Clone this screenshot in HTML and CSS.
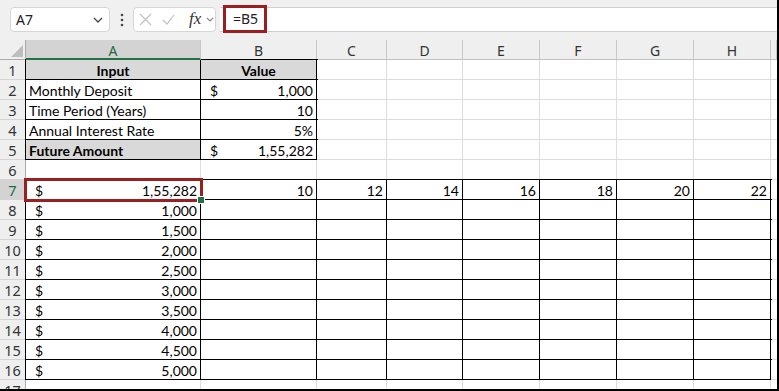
FILE: index.html
```html
<!DOCTYPE html>
<html lang="en">
<head>
  <meta charset="UTF-8" />
  <meta name="viewport" content="width=device-width, initial-scale=1.0"/>
  <title>Future Amount – Sheet</title>
  <link rel="stylesheet" href="styles.css">
</head>
<body>

<div class="app">

  <!-- Barra de fórmulas -->
  <div class="fbar">
    <div class="namebox">
      <span>A7</span>
      <svg width="10" height="6" viewBox="0 0 10 6"><polyline points="1,1 5,5 9,1" fill="none" stroke="#444" stroke-width="1.3"/></svg>
    </div>
    <svg class="dots" width="4" height="14" viewBox="0 0 4 14">
      <circle cx="2" cy="2" r="1.3" fill="#444"/>
      <circle cx="2" cy="7" r="1.3" fill="#444"/>
      <circle cx="2" cy="12" r="1.3" fill="#444"/>
    </svg>
    <div class="fxbox">
      <svg width="13" height="13" viewBox="0 0 13 13"><path d="M1 1 L12 12 M12 1 L1 12" stroke="#c2c2c2" stroke-width="1.2" fill="none"/></svg>
      <svg class="check" width="13" height="11" viewBox="0 0 13 11"><polyline points="1,6 5,10 12,1" stroke="#c2c2c2" stroke-width="1.2" fill="none"/></svg>
      <span class="fx">fx</span>
      <svg width="8" height="5" viewBox="0 0 8 5"><polyline points="1,1 4,4 7,1" fill="none" stroke="#888" stroke-width="1.1"/></svg>
    </div>
    <div class="finput"><span class="formula">=B5</span></div>
  </div>

  <!-- Hoja -->
  <div class="sheet">
    <div class="corner"><svg width="12" height="12" viewBox="0 0 12 12"><polygon points="12,0 12,12 0,12" fill="#bdbdbd"/></svg></div>
    <div class="ch sel">A</div><div class="ch">B</div><div class="ch">C</div><div class="ch">D</div>
    <div class="ch">E</div><div class="ch">F</div><div class="ch">G</div><div class="ch">H</div><div class="ch last"></div>

    <div class="rh">1</div>
    <div class="c t hd">Input</div><div class="c t hd">Value</div>
    <div class="c"></div><div class="c"></div><div class="c"></div><div class="c"></div><div class="c"></div><div class="c"></div><div class="c last"></div>

    <div class="rh">2</div>
    <div class="c t">Monthly Deposit</div><div class="c t acc"><span>$</span><span>1,000</span></div>
    <div class="c"></div><div class="c"></div><div class="c"></div><div class="c"></div><div class="c"></div><div class="c"></div><div class="c last"></div>

    <div class="rh">3</div>
    <div class="c t">Time Period (Years)</div><div class="c t num">10</div>
    <div class="c"></div><div class="c"></div><div class="c"></div><div class="c"></div><div class="c"></div><div class="c"></div><div class="c last"></div>

    <div class="rh">4</div>
    <div class="c t">Annual Interest Rate</div><div class="c t num">5%</div>
    <div class="c"></div><div class="c"></div><div class="c"></div><div class="c"></div><div class="c"></div><div class="c"></div><div class="c last"></div>

    <div class="rh">5</div>
    <div class="c t shade bold">Future Amount</div><div class="c t acc"><span>$</span><span>1,55,282</span></div>
    <div class="c"></div><div class="c"></div><div class="c"></div><div class="c"></div><div class="c"></div><div class="c"></div><div class="c last"></div>

    <div class="rh">6</div>
    <div class="c"></div><div class="c"></div><div class="c"></div><div class="c"></div><div class="c"></div><div class="c"></div><div class="c"></div><div class="c"></div><div class="c last"></div>

    <div class="rh sel">7</div>
    <div class="c t acc active"><span>$</span><span>1,55,282</span></div>
    <div class="c t num">10</div><div class="c t num">12</div><div class="c t num">14</div><div class="c t num">16</div>
    <div class="c t num">18</div><div class="c t num">20</div><div class="c t num">22</div><div class="c last"></div>

    <div class="rh">8</div>
    <div class="c t acc"><span>$</span><span>1,000</span></div>
    <div class="c t"></div><div class="c t"></div><div class="c t"></div><div class="c t"></div><div class="c t"></div><div class="c t"></div><div class="c t"></div><div class="c last"></div>

    <div class="rh">9</div>
    <div class="c t acc"><span>$</span><span>1,500</span></div>
    <div class="c t"></div><div class="c t"></div><div class="c t"></div><div class="c t"></div><div class="c t"></div><div class="c t"></div><div class="c t"></div><div class="c last"></div>

    <div class="rh">10</div>
    <div class="c t acc"><span>$</span><span>2,000</span></div>
    <div class="c t"></div><div class="c t"></div><div class="c t"></div><div class="c t"></div><div class="c t"></div><div class="c t"></div><div class="c t"></div><div class="c last"></div>

    <div class="rh">11</div>
    <div class="c t acc"><span>$</span><span>2,500</span></div>
    <div class="c t"></div><div class="c t"></div><div class="c t"></div><div class="c t"></div><div class="c t"></div><div class="c t"></div><div class="c t"></div><div class="c last"></div>

    <div class="rh">12</div>
    <div class="c t acc"><span>$</span><span>3,000</span></div>
    <div class="c t"></div><div class="c t"></div><div class="c t"></div><div class="c t"></div><div class="c t"></div><div class="c t"></div><div class="c t"></div><div class="c last"></div>

    <div class="rh">13</div>
    <div class="c t acc"><span>$</span><span>3,500</span></div>
    <div class="c t"></div><div class="c t"></div><div class="c t"></div><div class="c t"></div><div class="c t"></div><div class="c t"></div><div class="c t"></div><div class="c last"></div>

    <div class="rh">14</div>
    <div class="c t acc"><span>$</span><span>4,000</span></div>
    <div class="c t"></div><div class="c t"></div><div class="c t"></div><div class="c t"></div><div class="c t"></div><div class="c t"></div><div class="c t"></div><div class="c last"></div>

    <div class="rh">15</div>
    <div class="c t acc"><span>$</span><span>4,500</span></div>
    <div class="c t"></div><div class="c t"></div><div class="c t"></div><div class="c t"></div><div class="c t"></div><div class="c t"></div><div class="c t"></div><div class="c last"></div>

    <div class="rh">16</div>
    <div class="c t acc"><span>$</span><span>5,000</span></div>
    <div class="c t"></div><div class="c t"></div><div class="c t"></div><div class="c t"></div><div class="c t"></div><div class="c t"></div><div class="c t"></div><div class="c last"></div>

    <div class="rh">17</div>
    <div class="c"></div><div class="c"></div><div class="c"></div><div class="c"></div><div class="c"></div><div class="c"></div><div class="c"></div><div class="c"></div><div class="c last"></div>
  </div>

</div>

</body>
</html>
```

FILE: styles.css
```css
* {
  box-sizing: border-box;
}

body {
  margin: 0;
  background: #fff;
}

.app {
  width: 779px;
  height: 391px;
  overflow: hidden;
  background: #f0f0f0;
  border-right: 2px solid #000;
  border-bottom: 2px solid #000;
  font-family: "Noto Sans", sans-serif;
  color: #222;
}

/* barra de fórmulas */
.fbar {
  height: 40px;
  display: flex;
  align-items: flex-start;
  padding: 7px 0 0 10px;
}

.namebox {
  width: 100px;
  height: 25px;
  background: #fff;
  border: 1px solid #d6d6d6;
  border-radius: 4px;
  display: flex;
  align-items: center;
  justify-content: space-between;
  padding: 0 6px 0 5px;
  font-size: 14px;
}

.dots {
  margin: 6px 9px 0 10px;
}

.fxbox {
  width: 83px;
  height: 25px;
  background: #fff;
  border: 1px solid #d6d6d6;
  border-radius: 4px;
  display: flex;
  align-items: center;
  padding-left: 5px;
}

.fxbox .check {
  margin-left: 10px;
}

.fx {
  font-family: "Liberation Serif", serif;
  font-style: italic;
  font-size: 17px;
  color: #333;
  margin: 0 5px 2px 14px;
}

.finput {
  flex: 1;
  height: 25px;
  margin-left: 4px;
  background: #fff;
  border-top: 1px solid #cfcfcf;
  border-bottom: 1px solid #cfcfcf;
  display: flex;
}

.formula {
  margin: -3px 0 -2px 3px;
  width: 44px;
  border: 3px solid #9c1f1f;
  font-size: 14px;
  line-height: 22px;
  padding-left: 7px;
}

/* hoja */
.sheet {
  display: grid;
  grid-template-columns: 26px 175px 116px 70px 76px 77px 77px 77px 77px 1fr;
  grid-auto-rows: 20px;
  background: #fff;
}

.corner {
  background: #efefef;
  border-right: 1px solid #ababab;
  border-bottom: 1px solid #ababab;
  display: flex;
  align-items: flex-end;
  justify-content: flex-end;
  padding: 0 2px 2px 0;
}

.ch {
  background: #efefef;
  border-right: 1px solid #c8c8c8;
  border-bottom: 1px solid #c0c0c0;
  text-align: center;
  font-size: 14px;
  line-height: 19px;
  padding-top: 1px;
  color: #333;
}

.ch.sel {
  position: relative;
  z-index: 1;
  background: #d3d3d3;
  color: #1e6b41;
  border-bottom: 2px solid #217346;
}

.rh {
  background: #efefef;
  border-right: 1px solid #ababab;
  border-bottom: 1px solid #d4d4d4;
  text-align: center;
  font-size: 14.5px;
  line-height: 18px;
  padding-top: 1px;
  color: #333;
}

.rh.sel {
  background: #d3d3d3;
  color: #1e6b41;
}

.c {
  border-right: 1px solid #dcdcdc;
  border-bottom: 1px solid #dcdcdc;
  padding: 2px 3px 0 3px;
  font-family: Lato, "Liberation Sans", sans-serif;
  font-size: 14px;
  line-height: 17px;
  color: #000;
  white-space: nowrap;
  background: #fff;
}

.c.last {
  border-right: none;
}

/* celdas con borde */
.c.t {
  border-right-color: #000;
  border-bottom-color: #000;
  outline: 1px solid #000;
}

.hd {
  background: #d9d9d9;
  font-weight: 700;
  text-align: center;
}

.shade {
  background: #d9d9d9;
}

.bold {
  font-weight: 700;
}

.num {
  text-align: right;
}

.acc {
  display: flex;
  justify-content: space-between;
  padding-left: 9px;
}

.c.active {
  position: relative;
  z-index: 2;
  outline: 3px solid #9c1f1f;
  outline-offset: -1px;
}

.c.active::after {
  content: "";
  position: absolute;
  right: -5px;
  bottom: -5px;
  width: 6px;
  height: 6px;
  background: #217346;
  border: 1px solid #fff;
}
```
